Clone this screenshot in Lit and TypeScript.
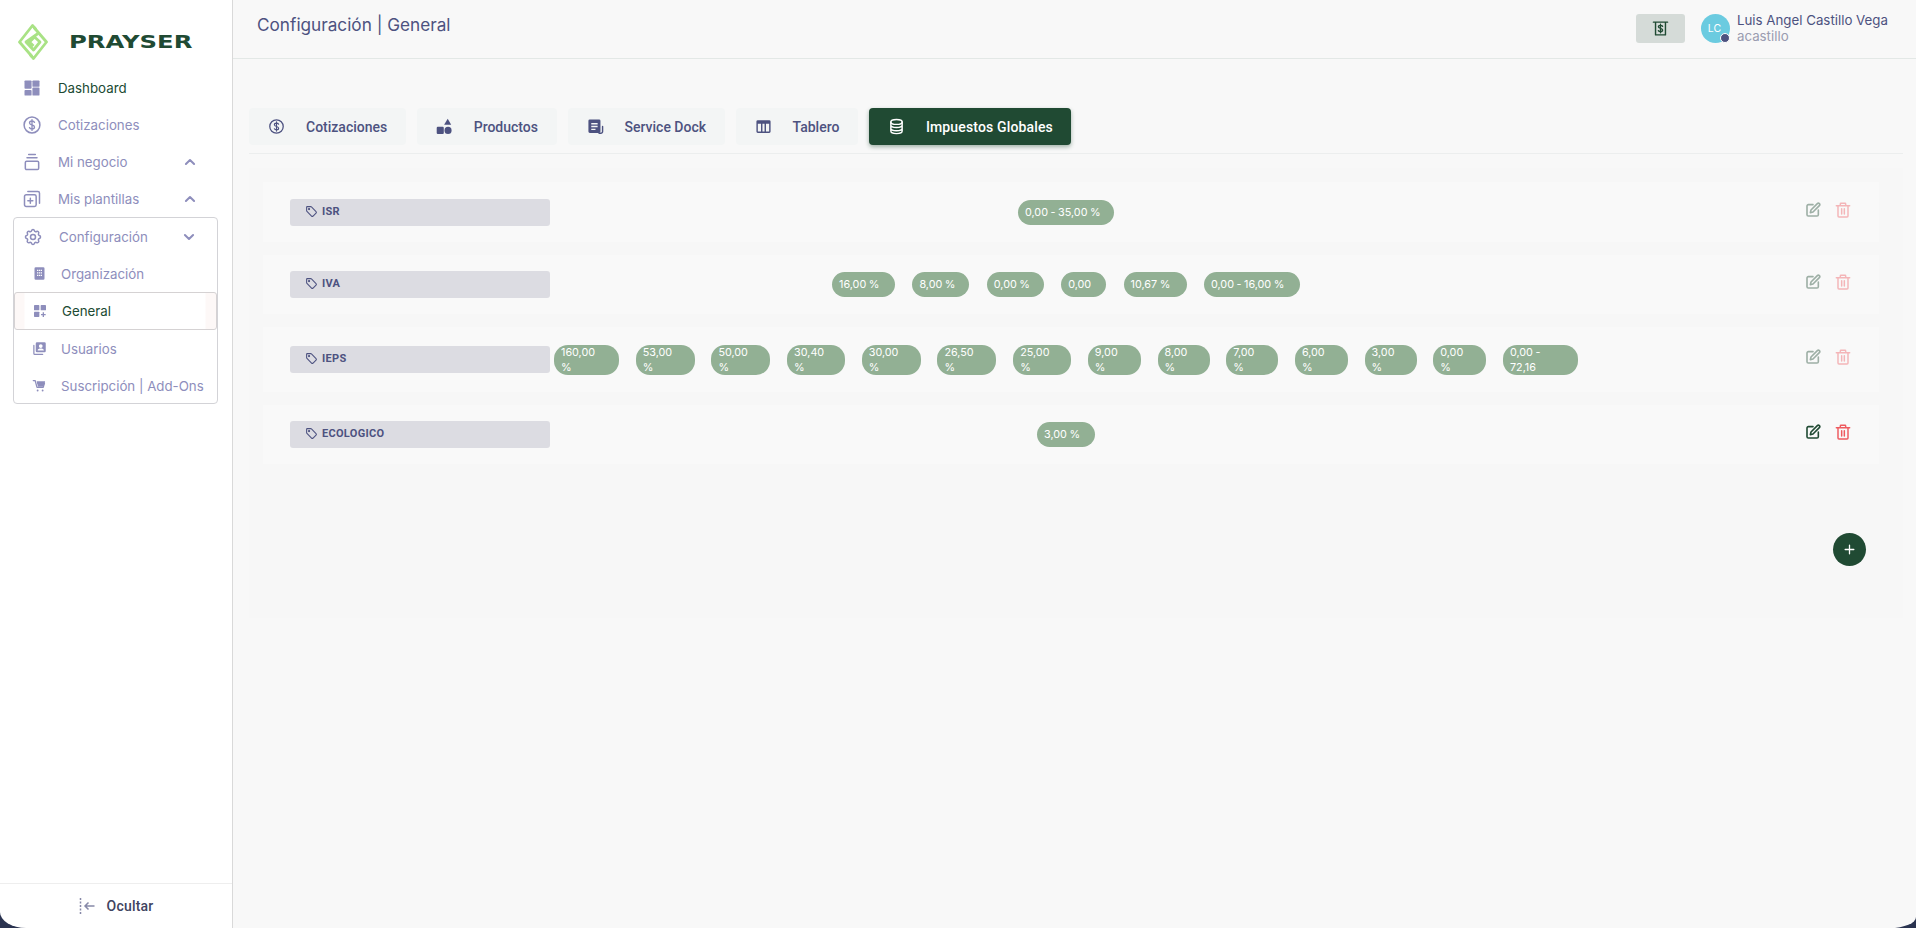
import { LitElement, html, css, svg } from "lit";
import { customElement } from "lit/decorators.js";

const ico = (body: unknown, size = 20, vb = 24) =>
  html`<svg class="ic" width=${size} height=${size} viewBox="0 0 ${vb} ${vb}" fill="none" stroke="currentColor" stroke-width="2" stroke-linecap="round" stroke-linejoin="round">${body}</svg>`;

const icons = {
  dash: svg`<g fill="currentColor" stroke="none"><rect x="3" y="3" width="8.500" height="10" rx="1"/><rect x="12.500" y="3" width="8.500" height="7.500" rx="1"/><rect x="3" y="14.500" width="8.500" height="6.500" rx="1"/><rect x="12.500" y="11.500" width="8.500" height="9.500" rx="1"/></g>`,
  coin: svg`<circle cx="12" cy="12" r="9.500" stroke-width="1.800"/><path d="M15 8.800c-.5-1-1.600-1.600-3-1.600-1.800 0-3 1-3 2.400 0 3.200 6 1.600 6 4.800 0 1.400-1.300 2.400-3 2.400-1.400 0-2.500-.6-3-1.600M12 5.500v13" stroke-width="1.600"/>`,
  biz: svg`<path d="M8 3h8M6 7h12" stroke-width="1.800"/><rect x="4" y="11" width="16" height="10" rx="1.500" stroke-width="1.800"/>`,
  tpl: svg`<rect x="3" y="7" width="14" height="14" rx="2" stroke-width="1.800"/><path d="M7 3h12a2 2 0 0 1 2 2v12M10 11v6M7 14h6" stroke-width="1.800"/>`,
  gear: svg`<path stroke-width="1.800" d="M10.300 4.300c.4-1.700 3-1.700 3.400 0a1.700 1.700 0 0 0 2.600 1.100c1.500-.9 3.300.8 2.400 2.400a1.700 1.700 0 0 0 1 2.500c1.800.5 1.800 3 0 3.400a1.700 1.700 0 0 0-1 2.600c.9 1.500-.9 3.300-2.400 2.400a1.700 1.700 0 0 0-2.600 1c-.4 1.800-3 1.800-3.400 0a1.700 1.700 0 0 0-2.600-1c-1.500.9-3.300-.9-2.400-2.400a1.700 1.700 0 0 0-1-2.600c-1.800-.4-1.800-3 0-3.400a1.700 1.700 0 0 0 1-2.500c-.9-1.600.9-3.300 2.400-2.400a1.700 1.700 0 0 0 2.600-1.100z"/><circle cx="12" cy="12" r="3" stroke-width="1.800"/>`,
  org: svg`<path fill="currentColor" stroke="none" fill-rule="evenodd" d="M6 2h12a2 2 0 0 1 2 2v16a2 2 0 0 1-2 2H6a2 2 0 0 1-2-2V4a2 2 0 0 1 2-2zm2 4v2h2V6zm3 0v2h2V6zm3 0v2h2V6zm-6 4v2h2v-2zm3 0v2h2v-2zm3 0v2h2v-2zm-6 4v2h2v-2zm3 0v2h2v-2zm3 0v2h2v-2z"/>`,
  gen: svg`<g fill="currentColor" stroke="none"><rect x="3" y="3" width="8" height="8" rx="1"/><rect x="13" y="3" width="8" height="8" rx="1"/><rect x="3" y="13" width="8" height="8" rx="1"/><path d="M16 14h2v2.500h2.500v2H18V21h-2v-2.500h-2.500v-2H16z"/></g>`,
  users: svg`<path fill="currentColor" stroke="none" fill-rule="evenodd" d="M8 2h12a2 2 0 0 1 2 2v12a2 2 0 0 1-2 2H8a2 2 0 0 1-2-2V4a2 2 0 0 1 2-2zm6 3a3 3 0 1 0 0 6 3 3 0 0 0 0-6zm-5 10h10c0-2-2.500-3-5-3s-5 1-5 3z"/><path d="M3 7v13a1.500 1.500 0 0 0 1.500 1.500H17" stroke-width="2"/>`,
  cart: svg`<path d="M2 4h3l3 11h10l2-7H9"/><path fill="currentColor" stroke="none" d="M7.500 5h13.500l-2.500 9h-9z"/><circle cx="9" cy="20" r="1.500" fill="currentColor" stroke="none"/><circle cx="17" cy="20" r="1.500" fill="currentColor" stroke="none"/>`,
  shapes: svg`<g fill="currentColor" stroke="none"><path d="M16.500 1l5 8.500h-10z"/><rect x="1" y="12.500" width="10" height="10" rx="1.500"/><circle cx="17" cy="17.500" r="5"/></g>`,
  dock: svg`<path fill="currentColor" stroke="none" fill-rule="evenodd" d="M4 2h13a2 2 0 0 1 2 2v15a2 2 0 0 1-2 2H4a2 2 0 0 1-2-2V4a2 2 0 0 1 2-2zm2 5v2h9V7zm0 4v2h9v-2zm0 4v2h6v-2z"/><path d="M22 12v7a2.500 2.500 0 0 1-2.500 2.500H17" stroke-width="2"/>`,
  table: svg`<path fill="currentColor" stroke="none" fill-rule="evenodd" d="M4 3h16a2 2 0 0 1 2 2v14a2 2 0 0 1-2 2H4a2 2 0 0 1-2-2V5a2 2 0 0 1 2-2zm0 5v11h4.500V8zm6.500 0v11h3V8zm5 0v11H20V8z"/>`,
  db: svg`<ellipse cx="12" cy="5.500" rx="8" ry="3.500"/><path d="M4 5.500v13c0 1.900 3.600 3.500 8 3.500s8-1.600 8-3.500v-13M4 10c0 1.900 3.600 3.500 8 3.500s8-1.600 8-3.500M4 14.500c0 1.900 3.600 3.500 8 3.500s8-1.600 8-3.500"/>`,
  tag: svg`<path d="M3 4v6.500a2 2 0 0 0 .6 1.400l8.500 8.500a2 2 0 0 0 2.800 0l5.500-5.500a2 2 0 0 0 0-2.800L11.900 3.600A2 2 0 0 0 10.500 3H4a1 1 0 0 0-1 1z"/><circle cx="7.500" cy="7.500" r="1" fill="currentColor"/>`,
  edit: svg`<path d="M12 4H5a2 2 0 0 0-2 2v13a2 2 0 0 0 2 2h13a2 2 0 0 0 2-2v-7" stroke-width="2.400"/><path d="M18.500 2.500a2.100 2.100 0 0 1 3 3L12 15l-4 1 1-4z" stroke-width="2.400"/>`,
  trash: svg`<path d="M2 5.500h20M8 5.500V3a1 1 0 0 1 1-1h6a1 1 0 0 1 1 1v2.500M4.500 5.500V21a1.500 1.500 0 0 0 1.500 1.500h12a1.500 1.500 0 0 0 1.500-1.500V5.500M10 10v8M14 10v8" stroke-width="2.200"/>`,
  bill: svg`<path d="M2 3h20M5 3v18h14V3" stroke-width="2"/><path d="M15 9c-.5-1-1.600-1.500-3-1.500-1.700 0-3 .8-3 2.200 0 3 6 1.500 6 4.500 0 1.400-1.300 2.300-3 2.300-1.400 0-2.500-.5-3-1.500M12 6v12" stroke-width="1.800"/>`,
  chevUp: svg`<path d="M5 15.500l7-7 7 7" stroke-width="3.400"/>`,
  chevDown: svg`<path d="M5 8.500l7 7 7-7" stroke-width="3.400"/>`,
  plus: svg`<path d="M12 4v16M4 12h16" stroke-width="2.400"/>`,
};

const logo = html`<svg width="30" height="36" viewBox="0 0 30 36" fill="none" stroke="#a9e285" stroke-width="2.800" stroke-linejoin="round">
  <path d="M18 5.500L14.500 1.500 1.500 18 14 32.500"/>
  <path d="M12 30.500L15.500 34.500 28.500 18 16 3.500"/>
  <path d="M20 9.500L8 18l7.500 8 6.500-8-5.500-5-5 5 4 4"/>
</svg>`;

const chips: { n: string; c: [string, number][]; on?: boolean }[] = [
  { n: "ISR", c: [["0,00 - 35,00 %", 96]] },
  { n: "IVA", c: [["16,00 %", 63], ["8,00 %", 57], ["0,00 %", 57], ["0,00", 45], ["10,67 %", 63], ["0,00 - 16,00 %", 96]] },
  {
    n: "IEPS",
    c: [["160,00 %", 65], ["53,00 %", 59], ["50,00 %", 59], ["30,40 %", 58], ["30,00 %", 59], ["26,50 %", 59], ["25,00 %", 58], ["9,00 %", 53], ["8,00 %", 52], ["7,00 %", 52], ["6,00 %", 53], ["3,00 %", 52], ["0,00 %", 53], ["0,00 - 72,16", 75]],
  },
  { n: "ECOLOGICO", c: [["3,00 %", 58]], on: true },
];

@customElement("app-root")
export class AppRoot extends LitElement {
  static styles = css`
    :host { display: block; width: 1916px; height: 928px; font-family: Inter, "Liberation Sans", sans-serif; position: relative; overflow: hidden; background: #f8f8f8; }
    * { box-sizing: border-box; }
    .ic { display: block; flex: none; }
    .app { display: flex; height: 928px; }
    .side { width: 233px; flex: none; background: #fff; border-right: 1px solid #d9d9d9; display: flex; flex-direction: column; }
    .brand { display: flex; align-items: center; height: 69px; padding: 14px 0 0 18px; }
    .word { margin-left: 21px; font: bold 18px "DejaVu Sans", sans-serif; color: #204a33; transform: scaleX(1.35); transform-origin: left center; line-height: 18px; }
    .nav { display: flex; flex-direction: column; padding: 0 14px 0 13px; flex: 1; }
    .it { display: flex; align-items: center; gap: 16px; height: 37px; font-size: 13.300px; color: #8e8ebc; padding: 0 21px 0 9px; flex: none; }
    .it .lb { flex: 1; white-space: nowrap; }
    .it.cur { color: #204a33; }
    .it.cur .ic { color: #8e8ebc; }
    .box { border: 1px solid #d3d3d7; border-radius: 4px; height: 187px; display: flex; flex-direction: column; }
    .it.sub { padding-left: 18px; gap: 14px; }
    .it.sel { height: 38px; border: 1px solid #d5d2d3; border-radius: 3px; color: #204a33; background: linear-gradient(90deg, #fdf8f7 0, #fdf8f7 9px, #fff 10px, #fff 190px, #fdf8f7 191px); padding-left: 17px; }
    .it.sel .ic { color: #8e8ebc; }
    .foot { height: 45px; border-top: 1px solid #eee; display: flex; align-items: center; justify-content: center; gap: 12px; font: 500 14px Roboto, sans-serif; letter-spacing: .2px; color: #40435f; }
    .foot svg { color: #8789a8; }
    .main { flex: 1; min-width: 0; display: flex; flex-direction: column; }
    .head { height: 59px; border-bottom: 1px solid #e3e8e6; display: flex; padding: 14px 28px 0 24px; }
    .title { flex: 1; font-size: 17.200px; color: #4d5280; line-height: 22px; }
    .cash { width: 49px; height: 29px; background: #d5dbd8; border-radius: 3px; color: #204a33; display: flex; align-items: center; justify-content: center; margin-right: 16px; }
    .av { width: 29px; height: 29px; border-radius: 50%; background: #6bcbe0; color: #fff; font-size: 10.500px; display: flex; align-items: center; justify-content: center; position: relative; margin-right: 7px; padding-right: 2px; }
    .dot { position: absolute; right: 0; bottom: 0; width: 10px; height: 10px; border-radius: 50%; background: #4d5280; border: 1px solid #fff; }
    .who { line-height: 16px; font-size: 13.300px; color: #4d5280; margin-top: -2px; }
    .who div + div { color: #9a9cb0; }
    .tabs { display: flex; gap: 11px; margin: 49px 13px 0 16px; height: 46px; border-bottom: 1px solid #eceeee; }
    .tab { height: 37px; background: #f3f5f5; border-radius: 4px; display: flex; align-items: center; padding: 0 18.500px 0 19px; gap: 21px; font: 500 14px Roboto, sans-serif; color: #4d5280; }
    .tab.on { background: #204a33; color: #fff; box-shadow: 0 2px 4px rgba(32, 74, 51, .4); letter-spacing: .15px; }
    .panel { margin: 14px 13px 0 16px; height: 450px; background: #f7f7f7; padding: 14px 24px 0 14px; display: flex; flex-direction: column; gap: 13px; position: relative; }
    .row { background: #f9f9f9; display: flex; align-items: center; padding-left: 27px; min-height: 59px; }
    .row.first { min-height: 60px; }
    .row.tall { min-height: 65px; }
    .label { width: 260px; flex: none; height: 27px; background: #dcdce2; border-radius: 3px; display: flex; align-items: center; gap: 4px; padding: 0 0 2px 15px; font: 700 11px Roboto, sans-serif; letter-spacing: .3px; color: #4d5280; }
    .chips { width: 1026px; margin-left: 3px; flex: none; display: flex; justify-content: center; align-items: center; gap: 17.400px; }
    .chips.t { gap: 16.700px; justify-content: flex-start; padding-left: 1px; }
    .chip { flex: none; background: #92b094; color: #fff; font-size: 10.800px; line-height: 15px; word-spacing: -.5px; border-radius: 14px; padding: 5px 4px 5px 7px; }
    .t .chip { padding: 0 16px 0 7px; }
    .acts { margin-left: 226px; display: flex; gap: 14px; padding-bottom: 5px; opacity: .42; }
    .acts.on { opacity: 1; }
    .edit { color: #204a33; }
    .del { color: #ee5a5f; }
    .fab { position: absolute; left: 1584px; top: 365px; width: 33px; height: 33px; border-radius: 50%; background: #204a33; color: #fff; display: flex; align-items: center; justify-content: center; }
    .corner { position: absolute; bottom: 0; width: 26px; background: #2a3350; }
    .corner::after { content: ""; position: absolute; inset: 0; }
    .corner.l { left: 0; height: 16px; }
    .corner.l::after { background: #fff; border-bottom-left-radius: 26px 16px; }
    .corner.r { right: 0; height: 11px; }
    .corner.r::after { background: #f8f8f8; border-bottom-right-radius: 26px 11px; }
  `;

  tab(ic: unknown, t: string, on = false) {
    return html`<div class="tab ${on ? "on" : ""}">${ico(ic, 17)}<span>${t}</span></div>`;
  }

  render() {
    return html`<div class="app">
      <aside class="side">
        <div class="brand">${logo}<span class="word">PRAYSER</span></div>
        <nav class="nav">
          <div class="it cur">${ico(icons.dash, 20)}<span class="lb">Dashboard</span></div>
          <div class="it">${ico(icons.coin, 20)}<span class="lb">Cotizaciones</span></div>
          <div class="it">${ico(icons.biz, 20)}<span class="lb">Mi negocio</span>${ico(icons.chevUp, 14)}</div>
          <div class="it">${ico(icons.tpl, 20)}<span class="lb">Mis plantillas</span>${ico(icons.chevUp, 14)}</div>
          <div class="box">
            <div class="it">${ico(icons.gear, 20)}<span class="lb">Configuración</span>${ico(icons.chevDown, 14)}</div>
            <div class="it sub">${ico(icons.org, 15)}<span class="lb">Organización</span></div>
            <div class="it sub sel">${ico(icons.gen, 16)}<span class="lb">General</span></div>
            <div class="it sub">${ico(icons.users, 15)}<span class="lb">Usuarios</span></div>
            <div class="it sub">${ico(icons.cart, 15)}<span class="lb">Suscripción | Add-Ons</span></div>
          </div>
        </nav>
        <div class="foot">
          <svg width="16" height="16" viewBox="0 0 16 16" fill="none" stroke="currentColor" stroke-width="1.500"><path d="M1.500 0v16" stroke-dasharray="2 1.500"/><path d="M15.500 8H6M9.500 4.500L6 8l3.500 3.500"/></svg>
          <span>Ocultar</span>
        </div>
      </aside>
      <main class="main">
        <header class="head">
          <div class="title">Configuración | General</div>
          <div class="cash">${ico(icons.bill, 17)}</div>
          <div class="av">LC<span class="dot"></span></div>
          <div class="who"><div>Luis Angel Castillo Vega</div><div>acastillo</div></div>
        </header>
        <div class="tabs">
          ${this.tab(icons.coin, "Cotizaciones")}
          ${this.tab(icons.shapes, "Productos")}
          ${this.tab(icons.dock, "Service Dock")}
          ${this.tab(icons.table, "Tablero")}
          ${this.tab(icons.db, "Impuestos Globales", true)}
        </div>
        <section class="panel">
          ${chips.map(
            (r, i) => html`<div class="row ${i === 0 ? "first" : ""} ${i === 2 ? "tall" : ""}">
              <div class="label">${ico(icons.tag, 13)}<span>${r.n}</span></div>
              <div class="chips ${i === 2 ? "t" : ""}">
                ${r.c.map(([t, w]) => html`<div class="chip" style="width:${w}px">${t}</div>`)}
              </div>
              <div class="acts ${r.on ? "on" : ""}">
                <span class="edit">${ico(icons.edit, 16)}</span>
                <span class="del">${ico(icons.trash, 16)}</span>
              </div>
            </div>`
          )}
          <div class="fab">${ico(icons.plus, 13)}</div>
        </section>
      </main>
    </div>
    <div class="corner l"></div>
    <div class="corner r"></div>`;
  }
}
